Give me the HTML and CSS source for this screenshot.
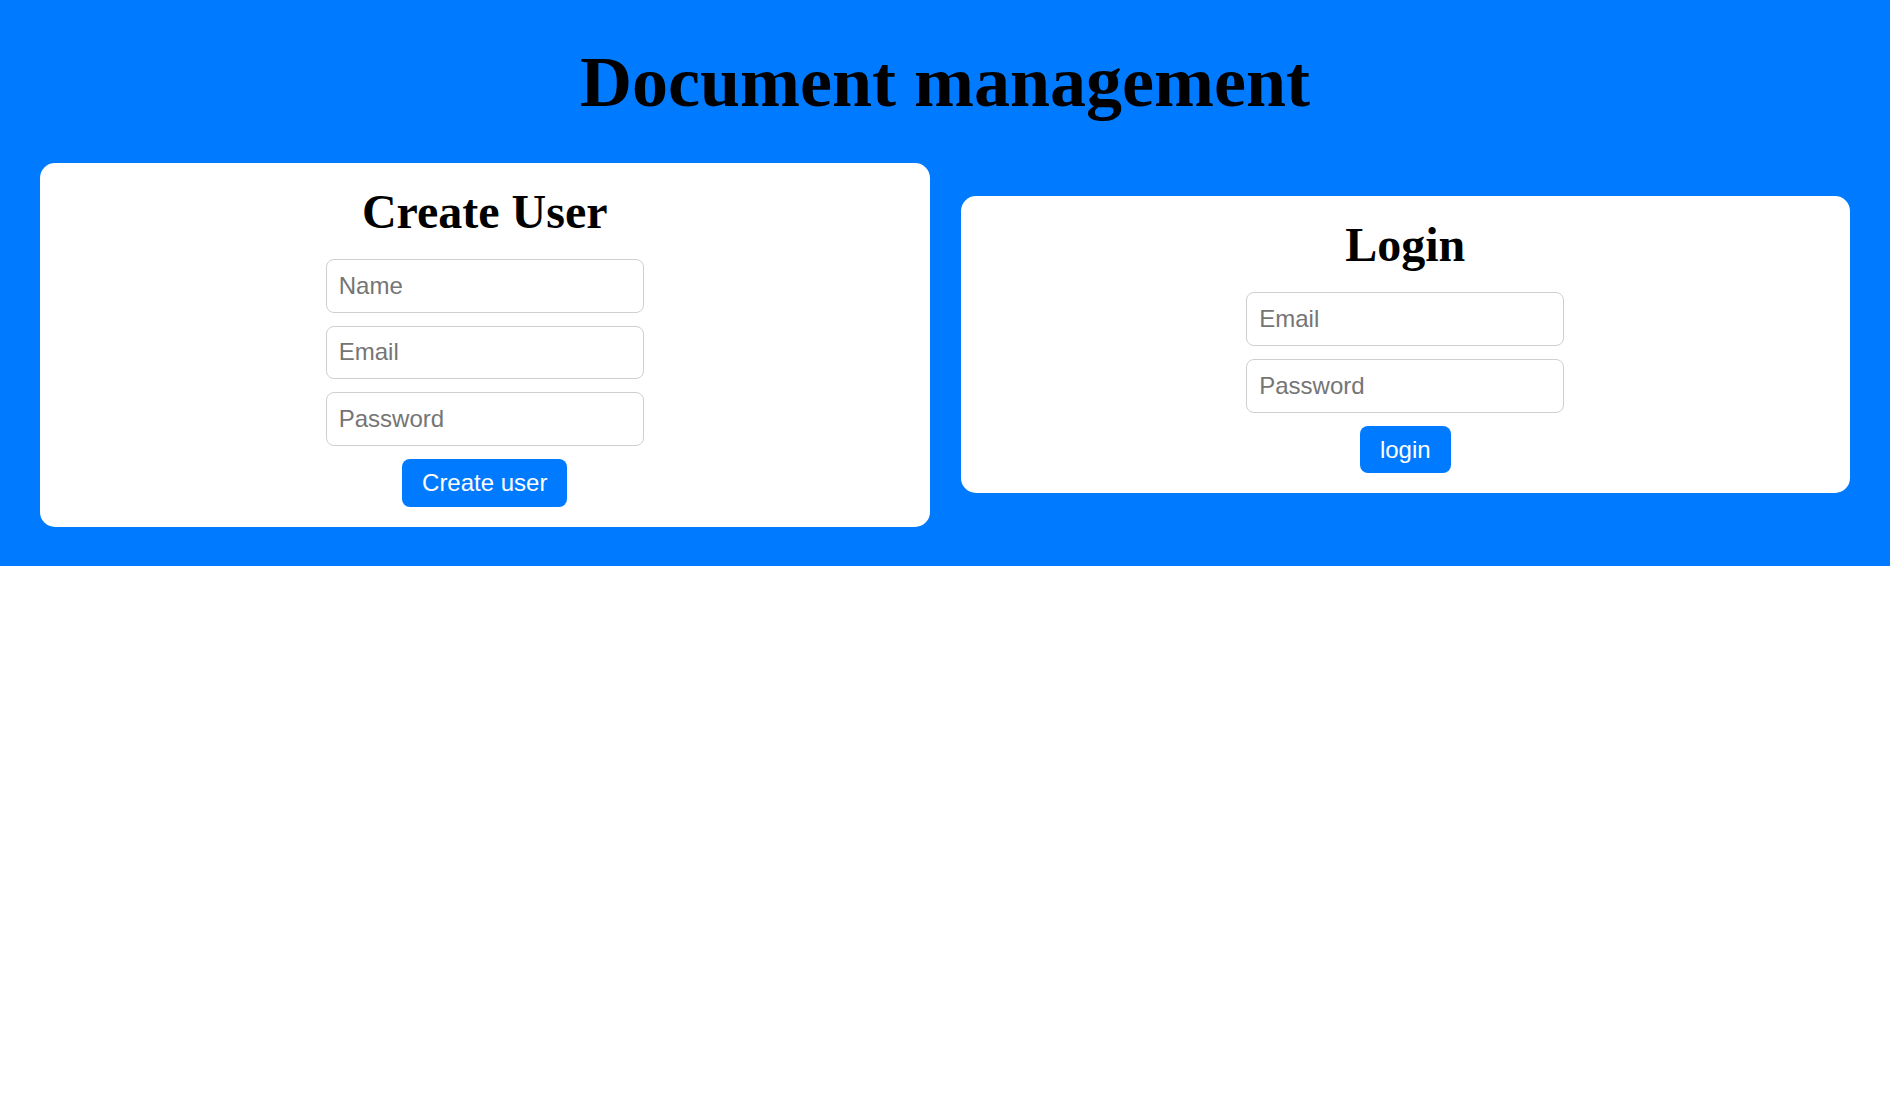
FILE: index.html
```html
<!DOCTYPE html>
<html lang="en">
<head>
<meta charset="utf-8">
<title>Document management</title>
<link rel="stylesheet" href="styles.css">
</head>
<body>
<header class="hero">
  <h1 class="title">Document management</h1>
  <div class="cards">
    <section class="card">
      <h2 class="card-title">Create User</h2>
      <input class="field" type="text" placeholder="Name">
      <input class="field" type="email" placeholder="Email">
      <input class="field" type="password" placeholder="Password">
      <button class="btn" type="button">Create user</button>
    </section>
    <section class="card">
      <h2 class="card-title">Login</h2>
      <input class="field" type="email" placeholder="Email">
      <input class="field" type="password" placeholder="Password">
      <button class="btn" type="button">login</button>
    </section>
  </div>
</header>
</body>
</html>
```
FILE: styles.css
```css
html, body {
  margin: 0;
  padding: 0;
  background: #ffffff;
}

.hero {
  background: #007bff;
  padding: 42px 40px 39.5px;
}

.title {
  margin: 0 0 41px;
  font-family: "Liberation Serif", "Times New Roman", serif;
  font-weight: bold;
  font-size: 72px;
  line-height: 80px;
  text-align: center;
  color: #000;
}

.cards {
  display: flex;
  align-items: center;
  gap: 31px;
}

.card {
  flex: 1 1 0;
  background: #ffffff;
  border-radius: 15px;
  padding: 22px 20px 20px;
  display: flex;
  flex-direction: column;
  align-items: center;
}

.card-title {
  margin: 0 0 21px;
  font-family: "Liberation Serif", "Times New Roman", serif;
  font-weight: bold;
  font-size: 48px;
  line-height: 53px;
  color: #000;
}

.field {
  box-sizing: border-box;
  width: 318px;
  height: 53.5px;
  margin: 0 0 13.2px;
  padding: 0 12px;
  border: 1.5px solid #cfcfcf;
  border-radius: 8px;
  background: #fff;
  font-family: "Liberation Sans", Arial, sans-serif;
  font-size: 24px;
  color: #000;
  outline: none;
}

.field::placeholder {
  color: #757575;
}

.btn {
  box-sizing: border-box;
  height: 47.7px;
  padding: 0 20px;
  border: none;
  border-radius: 8px;
  background: #007bff;
  color: #ffffff;
  font-family: "Liberation Sans", Arial, sans-serif;
  font-size: 24px;
  cursor: pointer;
}
```
